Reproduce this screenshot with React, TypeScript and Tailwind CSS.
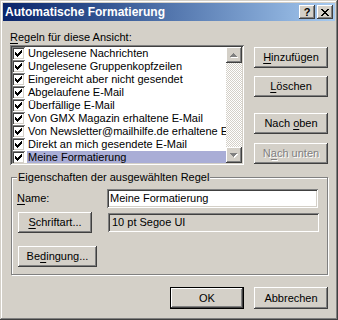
import React from "react";

const raised =
  "bg-[#d4d0c8] shadow-[inset_-1px_-1px_#404040,inset_1px_1px_#fff,inset_-2px_-2px_#808080,inset_2px_2px_#d4d0c8]";
const sunken =
  "shadow-[inset_1px_1px_#808080,inset_-1px_-1px_#fff,inset_2px_2px_#404040,inset_-2px_-2px_#d4d0c8]";

function U({ children }: { children: React.ReactNode }) {
  return <span className="underline decoration-1 underline-offset-[2px]">{children}</span>;
}

function pixPath(rows: string[]) {
  let d = "";
  rows.forEach((r, y) => {
    for (let x = 0; x < r.length; x++) if (r[x] === "X") d += `M${x} ${y}h1v1h-1z`;
  });
  return d;
}

const CHECK = pixPath([
  "......X",
  ".....XX",
  "X...XXX",
  "XX.XXX.",
  "XXXXX..",
  ".XXX...",
  "..X....",
]);

const CLOSE = pixPath([
  "XX....XX",
  ".XX..XX.",
  "..XXXX..",
  "...XX...",
  "..XXXX..",
  ".XX..XX.",
  "XX....XX",
]);

const UP = pixPath(["...X...", "..XXX..", ".XXXXX.", "XXXXXXX"]);
const DOWN = pixPath(["XXXXXXX", ".XXXXX.", "..XXX..", "...X..."]);

function CheckBox() {
  return (
    <div className={`w-[13px] h-[13px] shrink-0 bg-white flex items-center justify-center ${sunken}`}>
      <svg width="7" height="7" viewBox="0 0 7 7" shapeRendering="crispEdges">
        <path d={CHECK} fill="#000" />
      </svg>
    </div>
  );
}

function Arrow({ d }: { d: string }) {
  return (
    <div className={`w-[16px] h-[16px] shrink-0 flex items-center justify-center ${raised}`}>
      <svg width="8" height="5" viewBox="0 0 8 5" shapeRendering="crispEdges">
        <g transform="translate(1 1)">
          <path d={d} fill="#fff" />
        </g>
        <path d={d} fill="#808080" />
      </svg>
    </div>
  );
}

const items = [
  "Ungelesene Nachrichten",
  "Ungelesene Gruppenkopfzeilen",
  "Eingereicht aber nicht gesendet",
  "Abgelaufene E-Mail",
  "Überfällige E-Mail",
  "Von GMX Magazin erhaltene E-Mail",
  "Von Newsletter@mailhilfe.de erhaltene E-Mail",
  "Direkt an mich gesendete E-Mail",
  "Meine Formatierung",
];

function Btn({
  className,
  children,
}: {
  className: string;
  children: React.ReactNode;
}) {
  return (
    <div className={`flex items-center justify-center shrink-0 ${raised} ${className}`}>
      {children}
    </div>
  );
}

export default function App() {
  return (
    <div className="w-[338px] h-[320px] bg-[#d4d0c8] p-[3px] flex flex-col text-[11px] leading-[13px] text-black font-['Liberation_Sans',Arial,sans-serif] shadow-[inset_-1px_-1px_#404040,inset_1px_1px_#d4d0c8,inset_-2px_-2px_#808080,inset_2px_2px_#fff] overflow-hidden">
      {/* Title bar */}
      <div className="h-[18px] shrink-0 flex items-center px-[2px] bg-linear-to-r from-[#0a246a] to-[#a6caf0]">
        <span className="flex-1 font-bold text-white text-[12px]">Automatische Formatierung</span>
        <div className="flex gap-[2px]">
          <div className={`w-[16px] h-[14px] flex items-center justify-center font-bold text-[11px] leading-[14px] ${raised}`}>
            ?
          </div>
          <div className={`w-[16px] h-[14px] flex items-center justify-center ${raised}`}>
            <svg width="8" height="7" viewBox="0 0 8 7" shapeRendering="crispEdges">
              <path d={CLOSE} fill="#000" />
            </svg>
          </div>
        </div>
      </div>

      <div className="flex flex-col px-[7px] pt-[10px]">
        <div className="h-[13px]">
          <U>R</U>egeln für diese Ansicht:
        </div>

        <div className="flex mt-[1px] gap-[10px]">
          <div className={`w-[234px] h-[120px] bg-white p-[2px] flex ${sunken}`}>
            <div className="flex-1 flex flex-col overflow-hidden">
              {items.map((t, i) => (
                <div key={i} className="h-[13px] shrink-0 flex items-center">
                  <CheckBox />
                  <div
                    className={`ml-[2px] pl-[1px] flex-1 h-[13px] whitespace-nowrap overflow-hidden ${
                      i === items.length - 1 ? "bg-[#a9add6]" : ""
                    }`}
                  >
                    {t}
                  </div>
                </div>
              ))}
            </div>
            <div className="w-[16px] flex flex-col bg-[repeating-conic-gradient(#d4d0c8_0%_25%,#ffffff_0%_50%)] bg-size-[2px_2px]">
              <Arrow d={UP} />
              <div className="flex-1" />
              <Arrow d={DOWN} />
            </div>
          </div>

          <div className="flex flex-col w-[74px] pt-[2px]">
            <Btn className="h-[21px]">
              <span>
                <U>H</U>inzufügen
              </span>
            </Btn>
            <Btn className="h-[21px] mt-[8px]">
              <span>
                <U>L</U>öschen
              </span>
            </Btn>
            <Btn className="h-[21px] mt-[16px]">
              <span>
                Nach <U>o</U>ben
              </span>
            </Btn>
            <Btn className="h-[21px] mt-[9px] text-[#808080] [text-shadow:1px_1px_#fff]">
              <span>
                N<U>a</U>ch unten
              </span>
            </Btn>
          </div>
        </div>

        {/* Group box */}
        <div className="relative ml-[1px] mt-[12px] w-[317px] h-[98px] border border-[#808080] shadow-[inset_1px_1px_#fff,1px_1px_#fff] pt-[11px] pl-[6px] flex flex-col">
          <span className="absolute left-[5px] -top-[7px] px-[1px] bg-[#d4d0c8] h-[13px]">
            Eigenschaften der ausgewählten Regel
          </span>
          <div className="flex items-center h-[19px]">
            <div className="w-[90px] -ml-[1px] pl-0">
              <U>N</U>ame:
            </div>
            <div className={`w-[211px] h-[19px] bg-white flex items-center pl-[3px] ${sunken}`}>
              Meine Formatierung
            </div>
          </div>
          <div className="flex items-center mt-[4px]">
            <Btn className="w-[74px] h-[21px]">
              <span>
                <U>S</U>chriftart...
              </span>
            </Btn>
            <div className={`ml-[16px] w-[211px] h-[19px] flex items-center pl-[4px] ${sunken}`}>
              10 pt Segoe UI
            </div>
          </div>
          <Btn className="w-[79px] h-[21px] mt-[13px]">
            <span>
              Be<U>d</U>ingung...
            </span>
          </Btn>
        </div>

        {/* Bottom buttons */}
        <div className="flex justify-end gap-[10px] mt-[12px]">
          <div className="w-[74px] h-[22px] border border-black flex">
            <div className={`flex-1 flex items-center justify-center ${raised}`}>OK</div>
          </div>
          <Btn className="w-[74px] h-[22px]">Abbrechen</Btn>
        </div>
      </div>
    </div>
  );
}
